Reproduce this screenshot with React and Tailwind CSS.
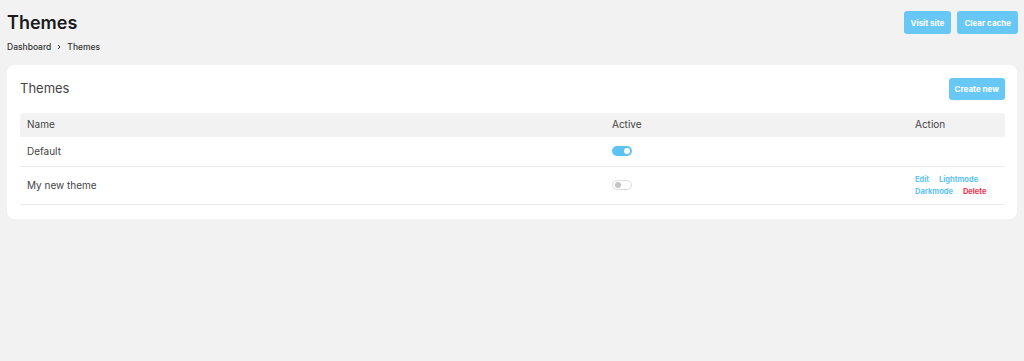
import React from 'react';

const themes = [
  { name: 'Default', active: true, actions: false },
  { name: 'My new theme', active: false, actions: true },
];

function Toggle({ on }) {
  return (
    <span
      className={
        'inline-flex h-[10px] w-[20px] items-center rounded-full px-[2px] ' +
        (on ? 'justify-end bg-[#5ec3f2]' : 'justify-start border border-[#dcdcdc] bg-white')
      }
    >
      <span className={'h-[6px] w-[6px] rounded-full ' + (on ? 'bg-white' : 'bg-[#c4c4c4]')} />
    </span>
  );
}

export default function App() {
  return (
    <div className="min-h-[361px] bg-[#f2f2f2] font-['Inter',sans-serif] text-[#1b1b1f]">
      <div className="flex items-start justify-between pl-[7px] pr-[6px] pt-[11px]">
        <div>
          <h1 className="mt-[1px] text-[18px] font-semibold leading-[22px]">Themes</h1>
          <div className="mt-[7px] flex items-center gap-[4px] text-[8.5px] font-medium text-[#333]">
            <span>Dashboard</span>
            <svg className="h-[8px] w-[8px]" viewBox="0 0 24 24" fill="none" stroke="currentColor" strokeWidth={3}>
              <path d="M9 6l6 6-6 6" />
            </svg>
            <span>Themes</span>
          </div>
        </div>
        <div className="flex gap-[6px]">
          <button className="h-[23px] rounded-[3px] bg-[#68c8f5] px-[7px] text-[8px] font-bold text-white">
            Visit site
          </button>
          <button className="h-[23px] rounded-[3px] bg-[#68c8f5] px-[7px] text-[8px] font-bold text-white">
            Clear cache
          </button>
        </div>
      </div>

      <div className="mx-[7px] mt-[11px] rounded-[8px] bg-white pb-[14px] pl-[13px] pr-[12px] pt-[13px]">
        <div className="flex items-center justify-between">
          <h2 className="text-[13px] text-[#444]">Themes</h2>
          <button className="h-[22px] rounded-[3px] bg-[#68c8f5] px-[6px] text-[8px] font-bold text-white">
            Create new
          </button>
        </div>

        <div className="mt-[13px] text-[10px] text-[#444]">
          <div className="grid h-[24px] grid-cols-[585px_303px_1fr] items-center rounded-t-[4px] bg-[#f2f2f2]">
            <div className="pl-[7px]">Name</div>
            <div className="pl-[7px]">Active</div>
            <div className="pl-[7px]">Action</div>
          </div>
          {themes.map((t) => (
            <div
              key={t.name}
              className={
                'grid grid-cols-[585px_303px_1fr] items-center border-b border-[#ececec] ' +
                (t.actions ? 'h-[38px]' : 'h-[30px]')
              }
            >
              <div className="pl-[7px]">{t.name}</div>
              <div className="flex pl-[7px]">
                <Toggle on={t.active} />
              </div>
              <div className="pl-[7px]">
                {t.actions && (
                  <div className="flex w-[80px] flex-wrap gap-x-[10px] gap-y-[1px] text-[7.5px] font-bold leading-[11px]">
                    <span className="text-[#5ec3f2]">Edit</span>
                    <span className="text-[#5ec3f2]">Lightmode</span>
                    <span className="text-[#5ec3f2]">Darkmode</span>
                    <span className="text-[#f2334f]">Delete</span>
                  </div>
                )}
              </div>
            </div>
          ))}
        </div>
      </div>
    </div>
  );
}
